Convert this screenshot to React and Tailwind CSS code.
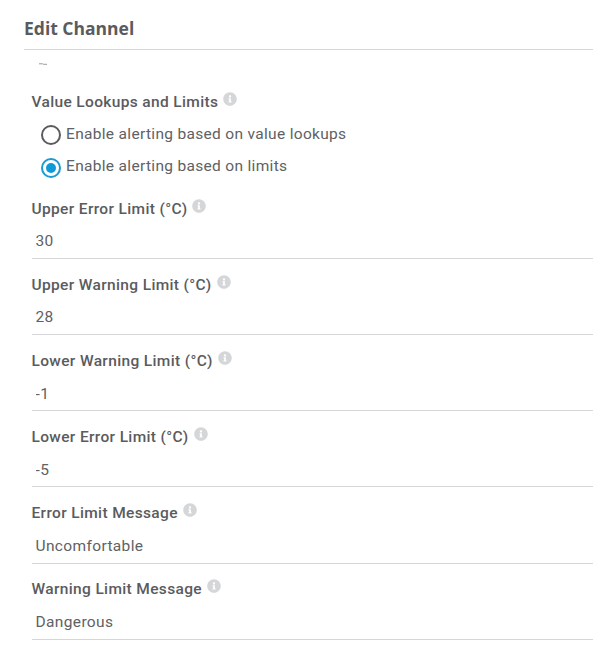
import React, { useState } from "react";
import { FaInfoCircle } from "react-icons/fa";

const fields = [
  { id: "upperError", label: "Upper Error Limit (°C)", value: "30" },
  { id: "upperWarning", label: "Upper Warning Limit (°C)", value: "28" },
  { id: "lowerWarning", label: "Lower Warning Limit (°C)", value: "-1" },
  { id: "lowerError", label: "Lower Error Limit (°C)", value: "-5" },
  { id: "errorMessage", label: "Error Limit Message", value: "Uncomfortable" },
  { id: "warningMessage", label: "Warning Limit Message", value: "Dangerous" },
];

const options = [
  { id: "lookups", label: "Enable alerting based on value lookups" },
  { id: "limits", label: "Enable alerting based on limits" },
];

function Label({ children, htmlFor }) {
  return (
    <div className="flex h-6 items-start">
      <label htmlFor={htmlFor} className="text-[15.5px] leading-6 font-medium tracking-[0.35px] whitespace-nowrap">
        {children}
      </label>
      <FaInfoCircle className="ml-[5px] mt-[2px] size-3.5 text-[#d5d6d8]" />
    </div>
  );
}

export default function App() {
  const [alerting, setAlerting] = useState("limits");
  const [formData, setFormData] = useState(
    Object.fromEntries(fields.map((field) => [field.id, field.value]))
  );
  const handleChange = (e) => {
    const { id, value } = e.target;
    setFormData((oldData) => ({ ...oldData, [id]: value }));
  };

  return (
    <div className="h-[649px] overflow-hidden bg-white pl-6 font-['Roboto',sans-serif] text-[#5a5b5e]">
      <h1 className="h-[50px] border-b border-[#d5d6d8] pt-4 font-['Open_Sans',sans-serif] text-[17.5px] leading-6 font-bold">
        Edit Channel
      </h1>
      <form className="pl-[7.5px]">
        {/* bottom edge of the entry scrolled under the header */}
        <div className="h-10 pt-3 pl-[7px]">
          <svg width="9" height="4" viewBox="0 0 9 4" fill="none" stroke="#9b9c9f">
            <path d="M0 1.8H3.5L4.5 2.3H8" />
          </svg>
        </div>
        <Label>Value Lookups and Limits</Label>
        <div className="mt-[4.6px] pl-[9px]">
          {options.map((option) => (
            <label key={option.id} className="flex h-8 items-start">
              <input
                type="radio"
                name="alerting"
                className="peer sr-only"
                checked={alerting === option.id}
                onChange={() => setAlerting(option.id)}
              />
              <span className="mt-[6.4px] mr-[5.5px] flex size-5 shrink-0 items-center justify-center rounded-full border-2 border-[#5a5b5e] text-transparent peer-checked:mt-[7.4px] peer-checked:border-[#1b9ad2] peer-checked:text-[#0e9bd8]">
                <span className="size-2.5 rounded-full bg-current" />
              </span>
              <span className="pt-[3.4px] text-[15.5px] leading-6 tracking-[0.32px] text-[#606164]">{option.label}</span>
            </label>
          ))}
        </div>
        {fields.map((field) => (
          <div key={field.id} className="flex h-[76.2px] flex-col border-b border-[#d5d6d8] pt-[13.94px]">
            <Label htmlFor={field.id}>{field.label}</Label>
            <input
              id={field.id}
              type="text"
              autoComplete="off"
              className="mt-[8.66px] h-6 w-full pl-1 text-[15.5px] leading-6 tracking-[0.36px] text-[#606164] outline-none"
              value={formData[field.id]}
              onChange={handleChange}
            />
          </div>
        ))}
      </form>
    </div>
  );
}
